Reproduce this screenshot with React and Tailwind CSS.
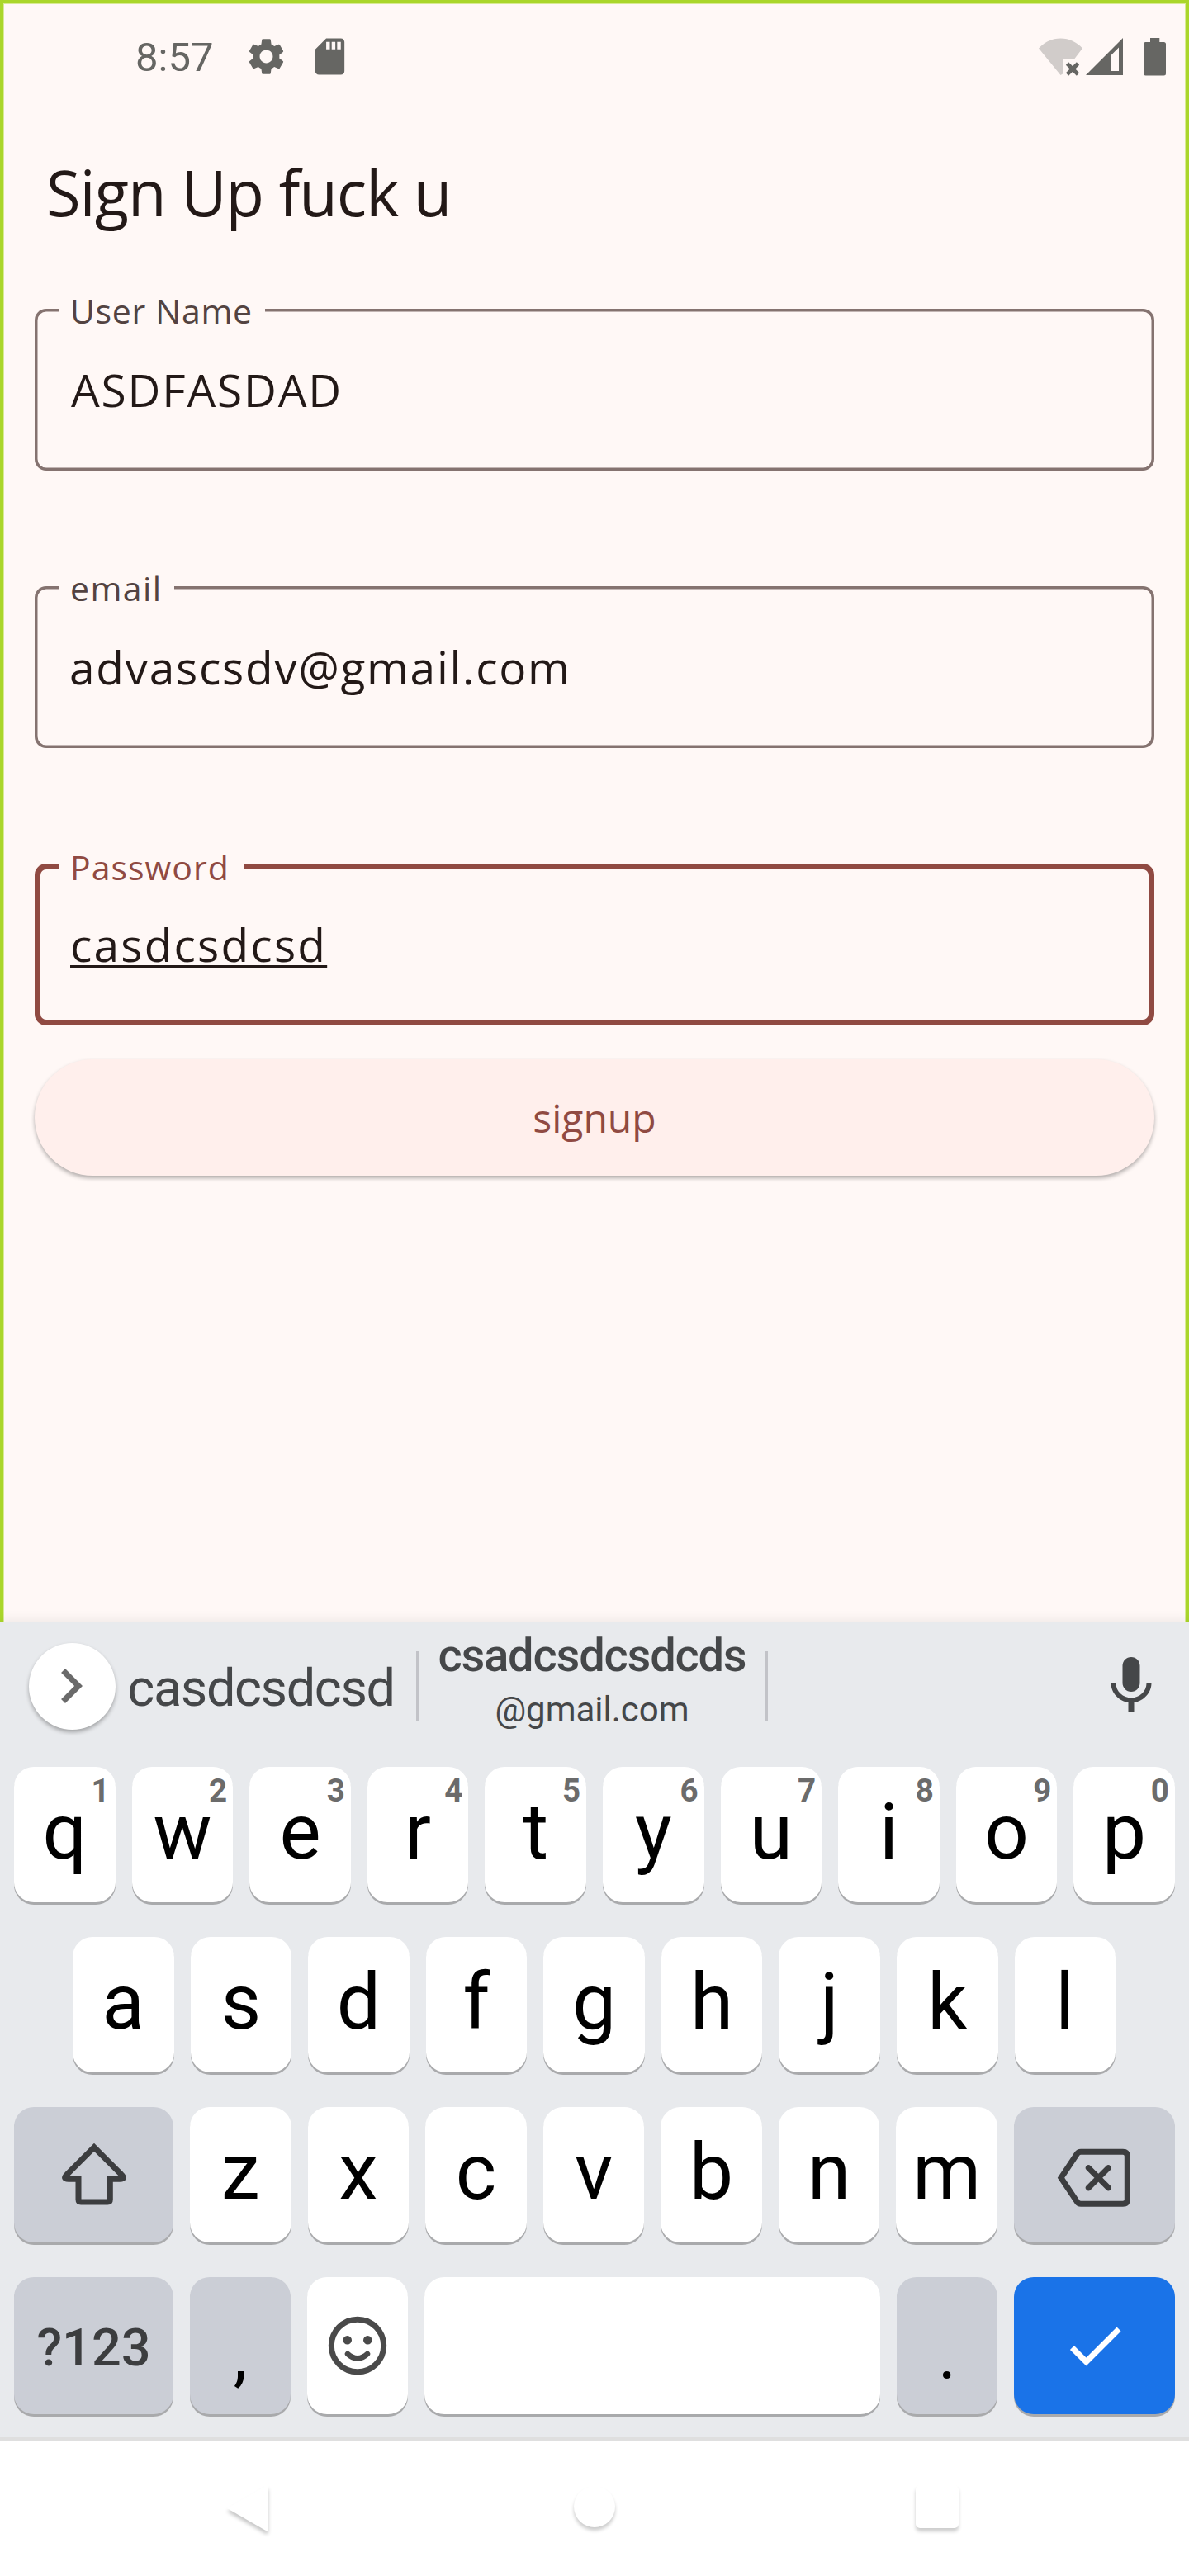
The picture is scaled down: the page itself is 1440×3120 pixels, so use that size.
import React from 'react';
import { MdSettings, MdSdStorage, MdChevronRight, MdMic, MdCheck } from 'react-icons/md';

function WifiOff() {
  return (
    <svg className="h-[46px] w-[54px]" viewBox="0 0 54 46">
      <path d="M0 12.5C7 5 16 0.5 26.5 0.5S46 5 53 12.5L43.5 25H29V43.5L26.5 45Z" fill="#d1ccca" />
      <path d="M34.5 31L47.5 44M47.5 31L34.5 44" stroke="#666663" strokeWidth="4.6" />
    </svg>
  );
}

function Signal() {
  return (
    <svg className="h-[45px] w-[45px]" viewBox="0 0 45 45">
      <path fillRule="evenodd" d="M0 45L45 0V45ZM31 20.5V40H40V11.5Z" fill="#666663" />
    </svg>
  );
}

function Battery() {
  return (
    <svg className="h-[46px] w-[27px]" viewBox="0 0 27 46">
      <path d="M8 0H19.3V5H24.5Q27 5 27 7.5V43Q27 45.5 24.5 45.5H2.5Q0 45.5 0 43V7.5Q0 5 2.5 5H8Z" fill="#666663" />
    </svg>
  );
}

function StatusBar() {
  return (
    <div className="flex h-[137px] items-center pl-[164px] pr-7 text-[#666663]">
      <span className="w-[132px] pt-[3px] text-[49px] leading-[56px]">8:57</span>
      <MdSettings className="size-[53px]" />
      <MdSdStorage className="ml-6 size-[53px]" />
      <div className="ml-auto flex items-center">
        <WifiOff />
        <div className="ml-[3.5px]"><Signal /></div>
        <div className="ml-[25px]"><Battery /></div>
      </div>
    </div>
  );
}

function Field({ label, value, focused, labelClass, valueClass }) {
  return (
    <div
      className={
        'relative flex h-[196px] items-center rounded-[14px] ' +
        (focused ? 'shadow-[inset_0_0_0_7px_#904a42]' : 'shadow-[inset_0_0_0_3.5px_#857370]')
      }
    >
      <span
        className={
          'absolute left-[30px] flex h-[50px] items-center whitespace-nowrap bg-[#fff8f6] pl-[13px] text-[41px] leading-[50px] ' +
          (focused ? '-top-[21px] text-[#904a42] ' : '-top-[23px] text-[#534341] ') +
          labelClass
        }
      >
        {label}
      </span>
      <span className={'whitespace-nowrap text-[55px] leading-[74px] text-[#231917] ' + valueClass}>{value}</span>
    </div>
  );
}

function Key({ children, hint, className = 'flex-1 bg-white' }) {
  return (
    <div
      className={
        'relative flex h-full items-center justify-center rounded-[24px] shadow-[0_3px_0_#a9aaac] ' + className
      }
    >
      {hint && <span className="absolute right-[7px] top-[6px] text-[38.5px] font-bold leading-[46px] text-[#6b6b6b]">{hint}</span>}
      {children}
    </div>
  );
}

function Letter({ children }) {
  return <span className="pb-[6px] text-[94.5px] leading-[110px] text-black">{children}</span>;
}

function ShiftIcon() {
  return (
    <svg className="size-[84px]" viewBox="0 0 84 84" fill="none" stroke="#3c3d3f" strokeWidth="7">
      <path d="M42 8.7L9 41.7Q3.2 47.2 11 47.2H23V72Q23 75 26 75H58.3Q61.3 75 61.3 72V47.2H73Q80.8 47.2 75 41.7Z" />
    </svg>
  );
}

function BackspaceIcon() {
  return (
    <svg className="mt-2 h-[84px] w-[98px]" viewBox="0 0 98 84" fill="none" stroke="#3c3d3f" strokeWidth="7">
      <path d="M8 41.7L27.5 12.5Q29 10.2 32 10.2H83Q88.3 10.2 88.3 15.5V68Q88.3 73.2 83 73.2H32Q29 73.2 27.5 70.9Z" />
      <path d="M41.3 29.7L65.3 53.7M65.3 29.7L41.3 53.7" strokeLinecap="round" />
    </svg>
  );
}

function EmojiIcon() {
  return (
    <svg className="size-[72px]" viewBox="0 0 72 72" fill="none" stroke="#4a4a4a" strokeWidth="7">
      <circle cx="36" cy="36" r="31.7" />
      <circle cx="23.7" cy="29.3" r="5.3" fill="#4a4a4a" stroke="none" />
      <circle cx="48.3" cy="29.3" r="5.3" fill="#4a4a4a" stroke="none" />
      <path d="M24 46Q36 57 48 46" strokeWidth="6.5" strokeLinecap="round" />
    </svg>
  );
}

function Suggestions() {
  return (
    <div className="flex h-[154px] items-center text-[#454749]">
      <div className="ml-[35px] flex size-[105px] shrink-0 items-center justify-center rounded-full bg-white pr-1 shadow-[0_3px_5px_rgba(0,0,0,0.3)]">
        <MdChevronRight className="size-[84px] shrink-0 text-[#6a6a6a]" />
      </div>
      <div className="flex w-[364px] justify-center pr-3 pt-[5px] text-[63px] leading-[74px]">
        <span className="tracking-[-1.4px]">casdcsdcsd</span>
      </div>
      <div className="h-[84px] w-1 bg-[#c2c3c8]" />
      <div className="flex w-[418px] flex-col items-center pb-[9px] leading-[65px]">
        <span className="text-[56px] font-medium tracking-[-1.2px]">csadcsdcsdcds</span>
        <span className="text-[42px]">@gmail.com</span>
      </div>
      <div className="h-[84px] w-1 bg-[#c2c3c8]" />
      <MdMic className="ml-auto mr-7 size-[84px]" />
    </div>
  );
}

const TOP_ROW = [['q', '1'], ['w', '2'], ['e', '3'], ['r', '4'], ['t', '5'], ['y', '6'], ['u', '7'], ['i', '8'], ['o', '9'], ['p', '0']];
const MIDDLE_ROW = ['a', 's', 'd', 'f', 'g', 'h', 'j', 'k', 'l'];
const BOTTOM_ROW = ['z', 'x', 'c', 'v', 'b', 'n', 'm'];

function Keyboard() {
  return (
    <div className="h-[991px] border-b-4 border-[#dfdfdf] bg-[#e8eaed] shadow-[0_-2px_14px_rgba(0,0,0,0.08)]">
      <Suggestions />
      <div className="mt-[21px] flex flex-col gap-[42px] px-[17px]">
        <div className="flex h-[164px] gap-5">
          {TOP_ROW.map(([k, hint]) => (
            <Key key={k} hint={hint}><Letter>{k}</Letter></Key>
          ))}
        </div>
        <div className="flex h-[164px] gap-5 pl-[71px] pr-[72px]">
          {MIDDLE_ROW.map((k) => (
            <Key key={k}><Letter>{k}</Letter></Key>
          ))}
        </div>
        <div className="flex h-[164px] gap-5">
          <Key className="w-[193px] bg-[#cbced6]"><ShiftIcon /></Key>
          {BOTTOM_ROW.map((k) => (
            <Key key={k}><Letter>{k}</Letter></Key>
          ))}
          <Key className="w-[195px] bg-[#cbced6]"><BackspaceIcon /></Key>
        </div>
        <div className="flex h-[166px] gap-5">
          <Key className="w-[193px] bg-[#cbced6]">
            <span className="pt-[5px] text-[63px] font-medium leading-[74px] text-[#3c3d3f]">?123</span>
          </Key>
          <Key className="w-[122px] bg-[#cbced6]">
            <span className="pt-6 text-[84px] leading-[98px] text-black">,</span>
          </Key>
          <Key className="w-[122px] bg-white"><EmojiIcon /></Key>
          <Key />
          <Key className="w-[122px] bg-[#cbced6]">
            <span className="pt-6 text-[84px] leading-[98px] text-black">.</span>
          </Key>
          <Key className="w-[195px] bg-[#1a73e8]"><MdCheck className="size-[84px] text-white" /></Key>
        </div>
      </div>
    </div>
  );
}

function NavBar() {
  return (
    <div className="flex h-[164px] items-center justify-between bg-white pl-[275px] pr-[279px]">
      <svg className="h-[66px] w-[50px] overflow-visible drop-shadow-[0_4px_2px_rgba(0,0,0,0.22)]" viewBox="0 0 50 66">
        <path d="M0 33L46 6.5Q50 4.5 50 8V57Q50 61.5 46 59.5Z" fill="#ffffff" />
      </svg>
      <div className="mb-1 ml-[6px] size-[50px] rounded-full bg-white shadow-[0_4px_4px_rgba(0,0,0,0.2)]" />
      <div className="mb-1 size-[52px] rounded-[5px] bg-white shadow-[0_4px_4px_rgba(0,0,0,0.2)]" />
    </div>
  );
}

export default function App() {
  return (
    <div className="flex h-[3120px] w-[1440px] flex-col overflow-hidden bg-white font-['Roboto',sans-serif]">
      <div className="h-[1965px] bg-[#fff8f6] shadow-[inset_4px_4px_0_#aad62b,inset_-4px_4px_0_#aad62b,inset_5px_5px_0_#d8ea94,inset_-5px_5px_0_#d8ea94]">
        <StatusBar />
        <div className="font-['Open_Sans',sans-serif]">
          <h1 className="flex h-[192px] items-center pl-[56px] text-[76px] tracking-[-1.05px] text-[#231917]">Sign Up fuck u</h1>
          <div className="mt-[45px] flex flex-col gap-[140px] px-[42px]">
            <Field label="User Name" value="ASDFASDAD" labelClass="w-[249px] tracking-[0.7px]" valueClass="pl-[44px] tracking-[1.8px]" />
            <Field label="email" value="advascsdv@gmail.com" labelClass="w-[139px] tracking-[1.4px]" valueClass="pl-[42px] tracking-[1.7px]" />
            <Field
              focused
              label="Password"
              value={<span className="underline decoration-[3.5px] underline-offset-[4px] [text-decoration-skip-ink:none]">casdcsdcsd</span>}
              labelClass="w-[223px] tracking-[1px]"
              valueClass="pl-[43px] tracking-[2.2px]"
            />
          </div>
          <div className="mx-[42px] mt-[41px] flex h-[141px] items-center justify-center rounded-full bg-[#ffefec] shadow-[0_3px_5px_rgba(0,0,0,0.3)]">
            <span className="text-[48px] leading-[66px] text-[#904a42]">signup</span>
          </div>
        </div>
      </div>
      <Keyboard />
      <NavBar />
    </div>
  );
}
